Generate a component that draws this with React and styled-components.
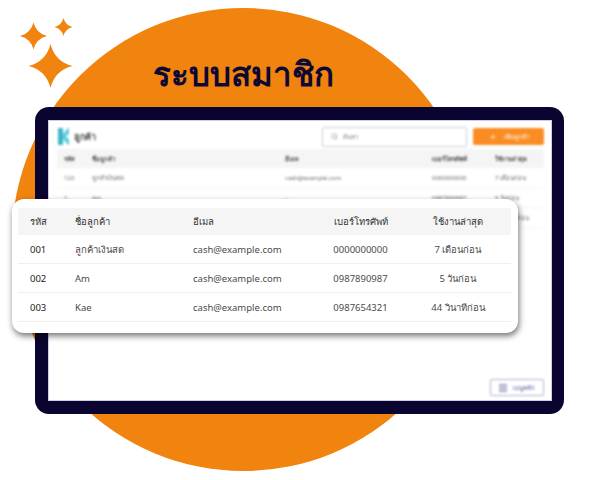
import React from 'react'
import styled, { createGlobalStyle } from 'styled-components'
import { Search, Plus } from 'lucide-react'

const GlobalStyle = createGlobalStyle`
  html, body {
    margin: 0;
    padding: 0;
    background: #fff;
    font-family: "Noto Sans", "Open Sans", sans-serif;
  }
`

const Page = styled.div`
  position: relative;
  width: 600px;
  height: 480px;
  overflow: hidden;
  background: #fff;
  padding: 54px 36px 0 35px;
  box-sizing: border-box;
`

const Circle = styled.div`
  position: absolute;
  left: 12px;
  top: 8px;
  width: 463px;
  height: 463px;
  border-radius: 50%;
  background: #f1830f;
`

const Sparkles = styled.svg`
  position: absolute;
  left: 18px;
  top: 16px;
`

const Title = styled.h1`
  position: relative;
  margin: 0 0 13px 0;
  padding-left: 118px;
  height: 40px;
  line-height: 40px;
  font-size: 33px;
  font-weight: 800;
  color: #0c0733;
`

const Frame = styled.div`
  position: relative;
  height: 307px;
  padding: 13px 12px 13px 13px;
  box-sizing: border-box;
  background: #0a0430;
  border-radius: 14px;
`

const Screen = styled.div`
  height: 100%;
  background: #fff;
  padding: 3px 7px 4px 8px;
  box-sizing: border-box;
  border: 1px solid #cfcde0;
  display: flex;
  flex-direction: column;
`

const Blurred = styled.div`
  flex: 1;
  display: flex;
  flex-direction: column;
  filter: blur(0.8px);
`

const TopBar = styled.div`
  display: flex;
  align-items: center;
  height: 25px;
`

const Brand = styled.div`
  display: flex;
  align-items: center;
  gap: 5px;
  flex: 1;
  padding-left: 1px;
  font-size: 9px;
  font-weight: 600;
  color: #444;
`

const SearchBox = styled.div`
  width: 145px;
  height: 20px;
  box-sizing: border-box;
  border: 1px solid #c9cdd8;
  border-radius: 2px;
  display: flex;
  align-items: center;
  gap: 5px;
  padding-left: 8px;
  font-size: 6px;
  color: #777;
`

const AddButton = styled.div`
  width: 71px;
  height: 17px;
  margin-left: 6px;
  border-radius: 2px;
  background: #fb8c23;
  color: #fff;
  font-size: 6px;
  font-weight: 500;
  display: flex;
  align-items: center;
  justify-content: center;
  gap: 7px;
`

const MiniRow = styled.div`
  display: grid;
  grid-template-columns: 28px 193px 147px 63px 1fr;
  height: ${(p) => (p.$head ? '19px' : '20px')};
  align-items: center;
  padding-left: 7px;
  font-size: 6px;
  white-space: nowrap;
  font-weight: ${(p) => (p.$head ? 600 : 400)};
  color: ${(p) => (p.$head ? '#444' : '#666')};
  background: ${(p) => (p.$head ? '#f5f5f5' : '#fff')};
  border-bottom: ${(p) => (p.$head ? 'none' : '1px solid #f4f4f4')};
  box-sizing: border-box;
`

const Spacer = styled.div`
  flex: 1;
`

const Foot = styled.div`
  display: flex;
  justify-content: flex-end;
`

const MenuButton = styled.div`
  width: 54px;
  height: 17px;
  box-sizing: border-box;
  border: 1px solid #a9b4d2;
  border-radius: 2px;
  display: flex;
  align-items: center;
  justify-content: center;
  gap: 6px;
  font-size: 6px;
  color: #3c4c8c;
`

const Card = styled.div`
  position: absolute;
  left: -23px;
  top: 92px;
  width: 506px;
  height: 134px;
  box-sizing: border-box;
  padding: 9px 7px 0 6px;
  background: #fff;
  border-radius: 12px;
  box-shadow: 1px 3px 6px rgba(0, 0, 0, 0.55);
`

const Row = styled.div`
  display: grid;
  grid-template-columns: 45px 118px 120px 95px 100px;
  align-items: center;
  height: ${(p) => (p.$head ? '27px' : '29px')};
  padding-left: 12px;
  box-sizing: border-box;
  font-size: 9.5px;
  white-space: nowrap;
  font-weight: ${(p) => (p.$head ? 500 : 400)};
  color: ${(p) => (p.$head ? '#333' : '#4a4a4a')};
  background: ${(p) => (p.$head ? '#f5f5f5' : '#fff')};
  border-radius: ${(p) => (p.$head ? '3px 3px 0 0' : '0')};
  border-bottom: ${(p) => (p.$head ? 'none' : '1px solid #efefef')};
`

const Code = styled.span`
  color: ${(p) => (p.$head ? '#333' : '#222')};
`

const Centered = styled.span`
  text-align: center;
`

const mini = [
  ['รหัส', 'ชื่อลูกค้า', 'อีเมล', 'เบอร์โทรศัพท์', 'ใช้งานล่าสุด'],
  ['123', 'ลูกค้าเงินสด', 'cash@example.com', '0000000000', '7 เดือนก่อน'],
  ['1', 'Am', '-', '0987890987', '5 วันก่อน'],
  ['2', 'Kae', '-', '0987654321', '44 วินาทีก่อน'],
]

const rows = [
  ['001', 'ลูกค้าเงินสด', 'cash@example.com', '0000000000', '7 เดือนก่อน'],
  ['002', 'Am', 'cash@example.com', '0987890987', '5 วันก่อน'],
  ['003', 'Kae', 'cash@example.com', '0987654321', '44 วินาทีก่อน'],
]

const star = (cx, cy, r) => {
  const k = r * 0.2
  return `M${cx} ${cy - r}Q${cx + k} ${cy - k} ${cx + r} ${cy}Q${cx + k} ${cy + k} ${cx} ${cy + r}Q${cx - k} ${cy + k} ${cx - r} ${cy}Q${cx - k} ${cy - k} ${cx} ${cy - r}Z`
}

function Logo() {
  return (
    <svg width="11" height="17" viewBox="0 0 11 17">
      <rect x="0" y="0" width="5" height="17" fill="#3fb6c9" />
      <path d="M5 6L10 0H11V6L8 8.500L11 11V17H10L5 11Z" fill="#5fd0dc" />
    </svg>
  )
}

function MenuIcon() {
  return (
    <svg width="8" height="8" viewBox="0 0 8 8">
      <path d="M0 1H8M0 4H8M0 7H8" stroke="#3c4c8c" strokeWidth="1.200" />
    </svg>
  )
}

export default function App() {
  return (
    <Page>
      <GlobalStyle />
      <Circle />
      <Sparkles width="60" height="76" viewBox="0 0 60 76">
        <path d={star(15.5, 20, 13.5)} fill="#f1830f" />
        <path d={star(45.5, 11, 9)} fill="#f1830f" />
        <path d={star(32.5, 50, 22)} fill="#f1830f" />
      </Sparkles>
      <Title>ระบบสมาชิก</Title>
      <Frame>
        <Screen>
          <Blurred>
            <TopBar>
              <Brand>
                <Logo />
                ลูกค้า
              </Brand>
              <SearchBox>
                <Search size={7} color="#777" />
                ค้นหา
              </SearchBox>
              <AddButton>
                <Plus size={8} color="#fff" />
                เพิ่มลูกค้า
              </AddButton>
            </TopBar>
            {mini.map((r, i) => (
              <MiniRow key={i} $head={i === 0}>
                {r.map((c, j) => (
                  <span key={j}>{c}</span>
                ))}
              </MiniRow>
            ))}
            <Spacer />
            <Foot>
              <MenuButton>
                <MenuIcon />
                เมนูหลัก
              </MenuButton>
            </Foot>
          </Blurred>
        </Screen>
        <Card>
          <Row $head>
            <Code $head>รหัส</Code>
            <span>ชื่อลูกค้า</span>
            <span>อีเมล</span>
            <Centered>เบอร์โทรศัพท์</Centered>
            <Centered>ใช้งานล่าสุด</Centered>
          </Row>
          {rows.map((r) => (
            <Row key={r[0]}>
              <Code>{r[0]}</Code>
              <span>{r[1]}</span>
              <span>{r[2]}</span>
              <Centered>{r[3]}</Centered>
              <Centered>{r[4]}</Centered>
            </Row>
          ))}
        </Card>
      </Frame>
    </Page>
  )
}
